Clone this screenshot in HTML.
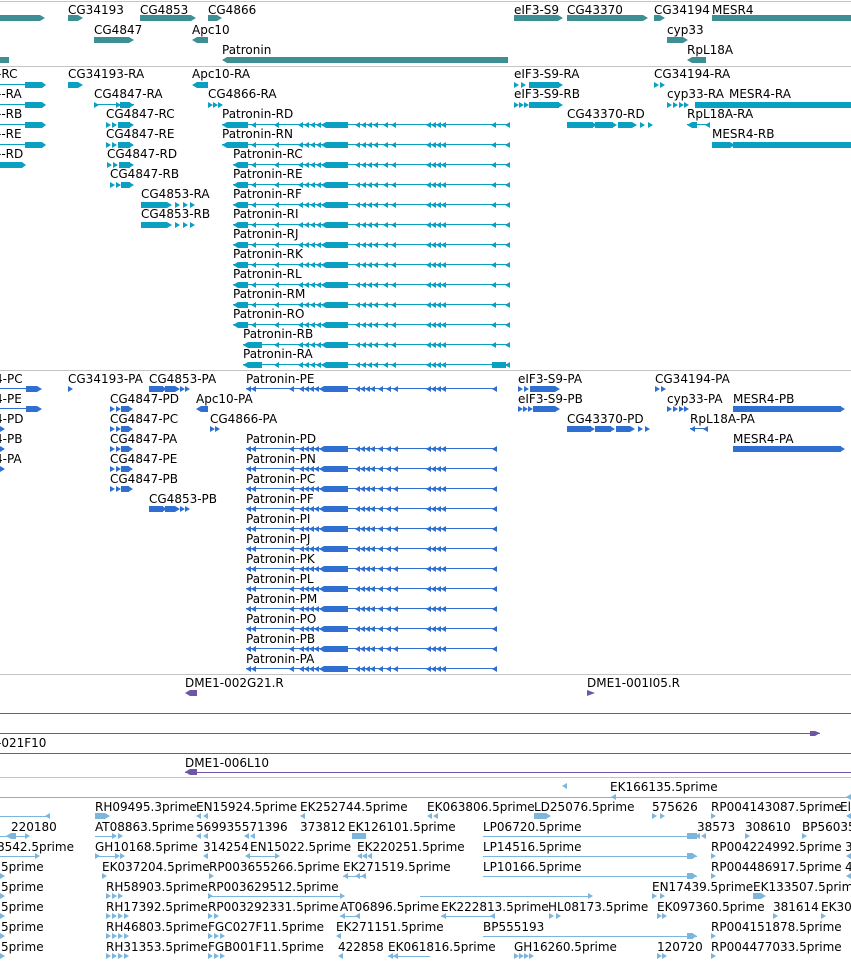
<!DOCTYPE html>
<html><head><meta charset="utf-8"><style>
html,body{margin:0;padding:0;background:#fff;width:851px;height:962px;overflow:hidden}
svg{display:block}
text{font-family:"DejaVu Sans","Liberation Sans",sans-serif;font-size:12px;fill:#000}
</style></head><body>
<svg width="851" height="962" viewBox="0 0 851 962" xmlns="http://www.w3.org/2000/svg">
<defs>
<polygon id="la" points="-5,0 0,-3 0,3"/>
<polygon id="ra" points="5,0 0,-3 0,3"/>
<g id="patT">
<use href="#la" x="256"/><use href="#la" x="279"/>
<use href="#la" x="303"/><use href="#la" x="309"/><use href="#la" x="315"/><use href="#la" x="321"/>
<polygon points="321,0 326,-3 348,-3 348,3 326,3"/>
<use href="#la" x="360"/><use href="#la" x="366"/><use href="#la" x="372"/><use href="#la" x="378"/>
<use href="#la" x="388"/><use href="#la" x="396"/>
<use href="#la" x="431"/><use href="#la" x="436"/><use href="#la" x="441"/><use href="#la" x="446"/>
<use href="#la" x="496"/><use href="#la" x="510"/>
</g>
<g id="patP">
<use href="#la" x="294"/><use href="#la" x="304"/><use href="#la" x="309"/><use href="#la" x="314"/><use href="#la" x="319"/>
<polygon points="319,0 324,-3 348,-3 348,3 324,3"/>
<use href="#la" x="360"/><use href="#la" x="365"/><use href="#la" x="370"/><use href="#la" x="375"/>
<use href="#la" x="383"/><use href="#la" x="391"/><use href="#la" x="398"/>
<use href="#la" x="431"/><use href="#la" x="436"/><use href="#la" x="441"/><use href="#la" x="446"/>
<use href="#la" x="497"/>
</g>
<g id="pst"><use href="#la" x="251"/><use href="#la" x="256"/></g>
</defs>

<g stroke="#c4c4c4" stroke-width="1">
<line x1="0" y1="1.5" x2="851" y2="1.5"/>
<line x1="0" y1="66.5" x2="851" y2="66.5"/>
<line x1="0" y1="370.5" x2="851" y2="370.5"/>
<line x1="0" y1="674.5" x2="851" y2="674.5"/>
<line x1="0" y1="777.5" x2="851" y2="777.5"/>
</g>

<g fill="#3d8f94">
<polygon points="0,15 40,15 45,18 40,21 0,21"/>
<polygon points="68,15 78,15 83,18 78,21 68,21"/>
<polygon points="140,15 191,15 196,18 191,21 140,21"/>
<polygon points="208,15 217,15 222,18 217,21 208,21"/>
<polygon points="514,15 558,15 563,18 558,21 514,21"/>
<polygon points="567,15 643,15 648,18 643,21 567,21"/>
<polygon points="654,15 660,15 665,18 660,21 654,21"/>
<rect x="712" y="15" width="139" height="6"/>
<polygon points="94,37 129,37 134,40 129,43 94,43"/>
<polygon points="192,40 197,37 208,37 208,43 197,43"/>
<polygon points="667,37 683,37 688,40 683,43 667,43"/>
<polygon points="222,60 227,57 508,57 508,63 227,63"/>
<rect x="0" y="57" width="9" height="6"/>
<polygon points="687,60 692,57 706,57 706,63 692,63"/>
</g>
<text x="68" y="14">CG34193</text><text x="140" y="14">CG4853</text><text x="208" y="14">CG4866</text>
<text x="514" y="14">eIF3-S9</text><text x="567" y="14">CG43370</text><text x="654" y="14">CG34194</text><text x="712" y="14">MESR4</text>
<text x="94" y="34">CG4847</text><text x="192" y="34">Apc10</text><text x="667" y="34">cyp33</text>
<text x="222" y="54">Patronin</text><text x="687" y="54">RpL18A</text>

<g fill="#0aa0c2" stroke="#0aa0c2">
<g stroke-width="1">
<line x1="0" y1="84.5" x2="45" y2="84.5"/><line x1="0" y1="104.5" x2="45" y2="104.5"/>
<line x1="0" y1="124.5" x2="45" y2="124.5"/><line x1="0" y1="144.5" x2="45" y2="144.5"/>
<line x1="94" y1="104.5" x2="134" y2="104.5"/>
<line x1="687" y1="124.5" x2="710" y2="124.5"/>
<line x1="712" y1="144.5" x2="851" y2="144.5"/>
<line x1="222" y1="124.5" x2="508" y2="124.5"/><line x1="222" y1="144.5" x2="508" y2="144.5"/>
<line x1="233" y1="164.5" x2="508" y2="164.5"/><line x1="233" y1="184.5" x2="508" y2="184.5"/>
<line x1="233" y1="204.5" x2="508" y2="204.5"/><line x1="233" y1="224.5" x2="508" y2="224.5"/>
<line x1="233" y1="244.5" x2="508" y2="244.5"/><line x1="233" y1="264.5" x2="508" y2="264.5"/>
<line x1="233" y1="284.5" x2="508" y2="284.5"/><line x1="233" y1="304.5" x2="508" y2="304.5"/>
<line x1="233" y1="324.5" x2="508" y2="324.5"/><line x1="243" y1="344.5" x2="508" y2="344.5"/>
<line x1="243" y1="364.5" x2="508" y2="364.5"/>
</g>
<g stroke="none">
<rect x="25" y="82" width="17" height="6"/><polygon points="42,82 46,85 42,88"/>
<rect x="25" y="102" width="17" height="6"/><polygon points="42,102 46,105 42,108"/>
<rect x="25" y="122" width="17" height="6"/><polygon points="42,122 46,125 42,128"/>
<rect x="25" y="142" width="17" height="6"/><polygon points="42,142 46,145 42,148"/>
<rect x="0" y="162" width="22" height="6"/><polygon points="22,162 26,165 22,168"/>
<polygon points="68,82 78,82 83,85 78,88 68,88"/>
<polygon points="192,85 197,82 208,82 208,88 197,88"/>
<use href="#ra" x="514" y="85"/><use href="#ra" x="521" y="85"/><rect x="529" y="82" width="30" height="6"/><use href="#ra" x="558" y="85"/>
<use href="#ra" x="654" y="85"/><use href="#ra" x="660" y="85"/>
<use href="#ra" x="94" y="105"/><use href="#ra" x="116" y="105"/><rect x="120" y="102" width="10" height="6"/><use href="#ra" x="129" y="105"/>
<use href="#ra" x="208" y="105"/><use href="#ra" x="213" y="105"/><use href="#ra" x="218" y="105"/>
<use href="#ra" x="514" y="105"/><use href="#ra" x="519" y="105"/><use href="#ra" x="524" y="105"/><rect x="529" y="102" width="30" height="6"/><use href="#ra" x="558" y="105"/>
<use href="#ra" x="667" y="105"/><use href="#ra" x="673" y="105"/><use href="#ra" x="679" y="105"/><use href="#ra" x="684" y="105"/>
<rect x="733" y="102" width="118" height="6"/><rect x="695" y="102" width="38" height="6"/>
<use href="#ra" x="106" y="125"/><use href="#ra" x="112" y="125"/><rect x="118" y="122" width="12" height="6"/><use href="#ra" x="129" y="125"/>
<use href="#ra" x="106" y="145"/><use href="#ra" x="112" y="145"/><rect x="118" y="142" width="12" height="6"/><use href="#ra" x="129" y="145"/>
<use href="#ra" x="107" y="165"/><use href="#ra" x="113" y="165"/><rect x="119" y="162" width="11" height="6"/><use href="#ra" x="129" y="165"/>
<use href="#ra" x="110" y="185"/><use href="#ra" x="116" y="185"/><rect x="121" y="182" width="9" height="6"/><use href="#ra" x="129" y="185"/>
<rect x="141" y="202" width="26" height="6"/><use href="#ra" x="167" y="205"/><use href="#ra" x="175" y="205"/><use href="#ra" x="183" y="205"/><use href="#ra" x="190" y="205"/>
<rect x="141" y="222" width="26" height="6"/><use href="#ra" x="167" y="225"/><use href="#ra" x="175" y="225"/><use href="#ra" x="183" y="225"/><use href="#ra" x="190" y="225"/>
<rect x="567" y="122" width="26" height="6"/><use href="#ra" x="592" y="125"/><rect x="595" y="122" width="18" height="6"/><use href="#ra" x="612" y="125"/><rect x="618" y="122" width="14" height="6"/><use href="#ra" x="632" y="125"/><use href="#ra" x="640" y="125"/><use href="#ra" x="648" y="125"/>
<polygon points="687,125 692,122 697,122 697,128 692,128"/><use href="#la" x="710" y="125"/>
<rect x="712" y="142" width="18" height="6"/><use href="#ra" x="730" y="145"/><rect x="733" y="142" width="118" height="6"/>
<polygon points="222,125 227,122 248,122 248,128 227,128"/><use href="#patT" y="125"/>
<polygon points="222,145 227,142 248,142 248,148 227,148"/><use href="#patT" y="145"/>
<polygon points="233,165 238,162 248,162 248,168 238,168"/><use href="#patT" y="165"/>
<polygon points="233,185 238,182 248,182 248,188 238,188"/><use href="#patT" y="185"/>
<polygon points="233,205 238,202 248,202 248,208 238,208"/><use href="#patT" y="205"/>
<polygon points="233,225 238,222 248,222 248,228 238,228"/><use href="#patT" y="225"/>
<polygon points="233,245 238,242 248,242 248,248 238,248"/><use href="#patT" y="245"/>
<polygon points="233,265 238,262 248,262 248,268 238,268"/><use href="#patT" y="265"/>
<polygon points="233,285 238,282 248,282 248,288 238,288"/><use href="#patT" y="285"/>
<polygon points="233,305 238,302 248,302 248,308 238,308"/><use href="#patT" y="305"/>
<polygon points="233,325 238,322 248,322 248,328 238,328"/><use href="#patT" y="325"/>
<polygon points="243,345 248,342 262,342 262,348 248,348"/><use href="#patT" y="345"/>
<polygon points="243,365 248,362 262,362 262,368 248,368"/><use href="#patT" y="365"/><rect x="492" y="362" width="14" height="6"/>
</g>
</g>
<text x="-3" y="78">-RC</text><text x="68" y="78">CG34193-RA</text><text x="192" y="78">Apc10-RA</text><text x="514" y="78">eIF3-S9-RA</text><text x="654" y="78">CG34194-RA</text>
<text x="-3" y="98">--RA</text><text x="94" y="98">CG4847-RA</text><text x="208" y="98">CG4866-RA</text><text x="514" y="98">eIF3-S9-RB</text><text x="667" y="98">cyp33-RA</text><text x="729" y="98">MESR4-RA</text>
<text x="-3" y="118">--RB</text><text x="106" y="118">CG4847-RC</text><text x="222" y="118">Patronin-RD</text><text x="567" y="118">CG43370-RD</text><text x="687" y="118">RpL18A-RA</text>
<text x="-3" y="138">--RE</text><text x="106" y="138">CG4847-RE</text><text x="222" y="138">Patronin-RN</text><text x="712" y="138">MESR4-RB</text>
<text x="-3" y="158">--RD</text><text x="107" y="158">CG4847-RD</text><text x="233" y="158">Patronin-RC</text>
<text x="110" y="178">CG4847-RB</text><text x="233" y="178">Patronin-RE</text>
<text x="141" y="198">CG4853-RA</text><text x="233" y="198">Patronin-RF</text>
<text x="141" y="218">CG4853-RB</text><text x="233" y="218">Patronin-RI</text>
<text x="233" y="238">Patronin-RJ</text><text x="233" y="258">Patronin-RK</text><text x="233" y="278">Patronin-RL</text>
<text x="233" y="298">Patronin-RM</text><text x="233" y="318">Patronin-RO</text><text x="243" y="338">Patronin-RB</text><text x="243" y="358">Patronin-RA</text>

<g fill="#2f6fd1" stroke="#2f6fd1">
<g stroke-width="1">
<line x1="0" y1="388.5" x2="40" y2="388.5"/><line x1="0" y1="408.5" x2="40" y2="408.5"/>
<line x1="246" y1="388.5" x2="495" y2="388.5"/>
<line x1="246" y1="448.5" x2="495" y2="448.5"/><line x1="246" y1="468.5" x2="495" y2="468.5"/>
<line x1="246" y1="488.5" x2="495" y2="488.5"/><line x1="246" y1="508.5" x2="495" y2="508.5"/>
<line x1="246" y1="528.5" x2="495" y2="528.5"/><line x1="246" y1="548.5" x2="495" y2="548.5"/>
<line x1="246" y1="568.5" x2="495" y2="568.5"/><line x1="246" y1="588.5" x2="495" y2="588.5"/>
<line x1="246" y1="608.5" x2="495" y2="608.5"/><line x1="246" y1="628.5" x2="495" y2="628.5"/>
<line x1="246" y1="648.5" x2="495" y2="648.5"/><line x1="246" y1="668.5" x2="495" y2="668.5"/>
<line x1="690" y1="428.5" x2="708" y2="428.5"/>
</g>
<g stroke="none">
<rect x="26" y="386" width="11" height="6"/><use href="#ra" x="37" y="389"/>
<rect x="26" y="406" width="11" height="6"/><use href="#ra" x="37" y="409"/>
<use href="#ra" x="0" y="429"/><use href="#ra" x="0" y="449"/><use href="#ra" x="0" y="469"/>
<use href="#ra" x="68" y="389"/>
<rect x="149" y="386" width="14" height="6"/><use href="#ra" x="162" y="389"/><rect x="165" y="386" width="10" height="6"/><use href="#ra" x="175" y="389"/><use href="#ra" x="180" y="389"/><use href="#ra" x="185" y="389"/>
<rect x="149" y="506" width="14" height="6"/><use href="#ra" x="162" y="509"/><rect x="165" y="506" width="10" height="6"/><use href="#ra" x="175" y="509"/><use href="#ra" x="180" y="509"/><use href="#ra" x="185" y="509"/>
<use href="#ra" x="110" y="409"/><use href="#ra" x="116" y="409"/><rect x="121" y="406" width="8" height="6"/><use href="#ra" x="128" y="409"/>
<use href="#ra" x="110" y="429"/><use href="#ra" x="116" y="429"/><rect x="121" y="426" width="8" height="6"/><use href="#ra" x="128" y="429"/>
<use href="#ra" x="110" y="449"/><use href="#ra" x="116" y="449"/><rect x="121" y="446" width="8" height="6"/><use href="#ra" x="128" y="449"/>
<use href="#ra" x="110" y="469"/><use href="#ra" x="116" y="469"/><rect x="121" y="466" width="8" height="6"/><use href="#ra" x="128" y="469"/>
<use href="#ra" x="110" y="489"/><use href="#ra" x="116" y="489"/><rect x="121" y="486" width="8" height="6"/><use href="#ra" x="128" y="489"/>
<polygon points="196,409 201,406 208,406 208,412 201,412"/>
<use href="#ra" x="210" y="429"/><use href="#ra" x="215" y="429"/>
<use href="#ra" x="518" y="389"/><use href="#ra" x="524" y="389"/><rect x="530" y="386" width="25" height="6"/><use href="#ra" x="555" y="389"/>
<use href="#ra" x="518" y="409"/><use href="#ra" x="523" y="409"/><use href="#ra" x="528" y="409"/><rect x="533" y="406" width="22" height="6"/><use href="#ra" x="555" y="409"/>
<use href="#ra" x="655" y="389"/><use href="#ra" x="661" y="389"/>
<use href="#ra" x="667" y="409"/><use href="#ra" x="673" y="409"/><use href="#ra" x="679" y="409"/><use href="#ra" x="684" y="409"/>
<rect x="733" y="406" width="108" height="6"/><use href="#ra" x="840" y="409"/>
<rect x="733" y="446" width="108" height="6"/><use href="#ra" x="840" y="449"/>
<rect x="567" y="426" width="24" height="6"/><use href="#ra" x="590" y="429"/><rect x="595" y="426" width="16" height="6"/><use href="#ra" x="610" y="429"/><rect x="616" y="426" width="14" height="6"/><use href="#ra" x="630" y="429"/><use href="#ra" x="638" y="429"/><use href="#ra" x="645" y="429"/>
<use href="#la" x="695" y="429"/><use href="#la" x="708" y="429"/>
<use href="#pst" y="389"/><use href="#patP" y="389"/>
<use href="#pst" y="449"/><use href="#patP" y="449"/>
<use href="#pst" y="469"/><use href="#patP" y="469"/>
<use href="#pst" y="489"/><use href="#patP" y="489"/>
<use href="#pst" y="509"/><use href="#patP" y="509"/>
<use href="#pst" y="529"/><use href="#patP" y="529"/>
<use href="#pst" y="549"/><use href="#patP" y="549"/>
<use href="#pst" y="569"/><use href="#patP" y="569"/>
<use href="#pst" y="589"/><use href="#patP" y="589"/>
<use href="#pst" y="609"/><use href="#patP" y="609"/>
<use href="#pst" y="629"/><use href="#patP" y="629"/>
<use href="#pst" y="649"/><use href="#patP" y="649"/>
<use href="#pst" y="669"/><use href="#patP" y="669"/>
</g>
</g>
<text x="-5" y="383">4-PC</text><text x="68" y="383">CG34193-PA</text><text x="149" y="383">CG4853-PA</text><text x="246" y="383">Patronin-PE</text><text x="518" y="383">eIF3-S9-PA</text><text x="655" y="383">CG34194-PA</text>
<text x="-5" y="403">4-PE</text><text x="110" y="403">CG4847-PD</text><text x="196" y="403">Apc10-PA</text><text x="518" y="403">eIF3-S9-PB</text><text x="667" y="403">cyp33-PA</text><text x="733" y="403">MESR4-PB</text>
<text x="-5" y="423">4-PD</text><text x="110" y="423">CG4847-PC</text><text x="210" y="423">CG4866-PA</text><text x="567" y="423">CG43370-PD</text><text x="690" y="423">RpL18A-PA</text>
<text x="-5" y="443">4-PB</text><text x="110" y="443">CG4847-PA</text><text x="246" y="443">Patronin-PD</text><text x="733" y="443">MESR4-PA</text>
<text x="-5" y="463">4-PA</text><text x="110" y="463">CG4847-PE</text><text x="246" y="463">Patronin-PN</text>
<text x="110" y="483">CG4847-PB</text><text x="246" y="483">Patronin-PC</text>
<text x="149" y="503">CG4853-PB</text><text x="246" y="503">Patronin-PF</text>
<text x="246" y="523">Patronin-PI</text><text x="246" y="543">Patronin-PJ</text><text x="246" y="563">Patronin-PK</text>
<text x="246" y="583">Patronin-PL</text><text x="246" y="603">Patronin-PM</text><text x="246" y="623">Patronin-PO</text>
<text x="246" y="643">Patronin-PB</text><text x="246" y="663">Patronin-PA</text>

<g fill="#6e55a8" stroke="#6e55a8">
<g stroke-width="1">
<line x1="0" y1="713.5" x2="851" y2="713.5"/>
<line x1="0" y1="733.5" x2="820" y2="733.5"/>
<line x1="0" y1="753.5" x2="851" y2="753.5"/>
<line x1="185" y1="772.5" x2="851" y2="772.5"/>
</g>
<g stroke="none">
<polygon points="185,693 190,690 197,690 197,696 190,696"/>
<polygon points="587,690 595,693 587,696"/>
<polygon points="810,731 815,731 820,733 815,736 810,736"/>
<polygon points="185,772 190,769 197,769 197,775 190,775"/>
</g>
</g>
<text x="185" y="687">DME1-002G21.R</text><text x="587" y="687">DME1-001I05.R</text>
<text x="-3" y="747">-021F10</text><text x="185" y="767">DME1-006L10</text>

<g fill="#7db6dd" stroke="#7db6dd">
<g stroke-width="1">
<line x1="0" y1="797.5" x2="851" y2="797.5"/>
<line x1="0" y1="816.5" x2="50" y2="816.5"/>
<line x1="0" y1="836.5" x2="28" y2="836.5"/>
<line x1="95" y1="836.5" x2="112" y2="836.5"/>
<line x1="250" y1="856.5" x2="275" y2="856.5"/>
<line x1="95" y1="856.5" x2="115" y2="856.5"/>
<line x1="343" y1="876.5" x2="365" y2="876.5"/>
<line x1="483" y1="836.5" x2="700" y2="836.5"/>
<line x1="483" y1="856.5" x2="697" y2="856.5"/>
<line x1="483" y1="876.5" x2="697" y2="876.5"/>
<line x1="208" y1="896.5" x2="340" y2="896.5"/>
<line x1="420" y1="896.5" x2="588" y2="896.5"/>
<line x1="340" y1="916.5" x2="360" y2="916.5"/>
<line x1="441" y1="916.5" x2="495" y2="916.5"/>
<line x1="483" y1="936.5" x2="697" y2="936.5"/>
<line x1="388" y1="956.5" x2="430" y2="956.5"/>
<line x1="0" y1="856.5" x2="35" y2="856.5"/>
</g>
<g stroke="none">
<use href="#la" x="616" y="797"/><use href="#la" x="851" y="797"/>
<use href="#la" x="50" y="816"/>
<rect x="95" y="813" width="10" height="6"/><use href="#ra" x="105" y="816"/>
<use href="#la" x="201" y="816"/><use href="#la" x="208" y="816"/>
<use href="#la" x="305" y="816"/>
<use href="#la" x="432" y="816"/><use href="#la" x="438" y="816"/>
<rect x="534" y="813" width="12" height="6"/><use href="#ra" x="546" y="816"/>
<use href="#la" x="567" y="786"/>
<use href="#ra" x="652" y="816"/><use href="#ra" x="660" y="816"/>
<use href="#ra" x="711" y="816"/>
<use href="#la" x="851" y="816"/>
<polygon points="6,836 11,833 16,833 16,839 11,839"/><use href="#ra" x="25" y="836"/>
<use href="#ra" x="112" y="836"/><use href="#ra" x="118" y="836"/>
<use href="#la" x="201" y="836"/><use href="#la" x="208" y="836"/>
<use href="#la" x="249" y="836"/><use href="#la" x="255" y="836"/>
<rect x="352" y="833" width="14" height="6"/>
<rect x="687" y="833" width="10" height="6"/><use href="#la" x="700" y="836"/><use href="#la" x="706" y="836"/>
<use href="#ra" x="745" y="836"/><use href="#ra" x="802" y="836"/>
<use href="#ra" x="35" y="856"/>
<use href="#ra" x="95" y="856"/><use href="#ra" x="115" y="856"/><use href="#ra" x="120" y="856"/>
<use href="#la" x="208" y="856"/><use href="#la" x="250" y="856"/><use href="#ra" x="275" y="856"/>
<use href="#la" x="362" y="856"/><use href="#la" x="367" y="856"/><use href="#la" x="372" y="856"/>
<polygon points="692,853 697,856 692,859"/><rect x="687" y="853" width="6" height="6"/>
<use href="#ra" x="711" y="856"/><use href="#la" x="851" y="856"/>
<use href="#ra" x="0" y="876"/><use href="#ra" x="102" y="876"/><use href="#ra" x="209" y="876"/>
<use href="#la" x="348" y="876"/><use href="#la" x="360" y="876"/><use href="#la" x="366" y="876"/>
<rect x="687" y="873" width="6" height="6"/><polygon points="692,873 697,876 692,879"/>
<use href="#ra" x="711" y="876"/><use href="#la" x="851" y="876"/>
<use href="#ra" x="0" y="896"/><use href="#ra" x="106" y="896"/><use href="#ra" x="112" y="896"/><use href="#ra" x="118" y="896"/>
<use href="#ra" x="208" y="896"/><use href="#ra" x="340" y="896"/><use href="#ra" x="588" y="896"/>
<use href="#ra" x="652" y="896"/><use href="#ra" x="660" y="896"/>
<rect x="753" y="893" width="8" height="6"/><use href="#ra" x="761" y="896"/>
<use href="#ra" x="0" y="916"/><use href="#ra" x="106" y="916"/><use href="#ra" x="112" y="916"/><use href="#ra" x="118" y="916"/><use href="#ra" x="124" y="916"/>
<use href="#ra" x="208" y="916"/><use href="#ra" x="214" y="916"/>
<use href="#la" x="345" y="916"/><use href="#la" x="360" y="916"/>
<use href="#la" x="446" y="916"/><use href="#la" x="495" y="916"/>
<use href="#ra" x="549" y="916"/><use href="#ra" x="556" y="916"/>
<use href="#ra" x="657" y="916"/><use href="#ra" x="662" y="916"/>
<use href="#ra" x="773" y="916"/><use href="#ra" x="821" y="916"/>
<use href="#ra" x="0" y="936"/><use href="#ra" x="106" y="936"/><use href="#ra" x="112" y="936"/><use href="#ra" x="118" y="936"/><use href="#ra" x="124" y="936"/>
<use href="#ra" x="208" y="936"/><use href="#ra" x="214" y="936"/><use href="#ra" x="220" y="936"/>
<use href="#la" x="341" y="936"/>
<rect x="687" y="933" width="6" height="6"/><polygon points="692,933 697,936 692,939"/>
<use href="#ra" x="711" y="936"/>
<use href="#ra" x="0" y="956"/><use href="#ra" x="106" y="956"/><use href="#ra" x="112" y="956"/><use href="#ra" x="118" y="956"/><use href="#ra" x="124" y="956"/>
<use href="#ra" x="208" y="956"/><use href="#ra" x="214" y="956"/><use href="#ra" x="220" y="956"/>
<use href="#la" x="343" y="956"/><use href="#la" x="393" y="956"/><use href="#la" x="398" y="956"/>
<use href="#ra" x="514" y="956"/><use href="#ra" x="519" y="956"/><use href="#ra" x="524" y="956"/><use href="#ra" x="529" y="956"/>
<use href="#ra" x="657" y="956"/><use href="#ra" x="662" y="956"/>
<use href="#ra" x="711" y="956"/>
</g>
</g>
<text x="610" y="791">EK166135.5prime</text>
<text x="95" y="811">RH09495.3prime</text><text x="196" y="811">EN15924.5prime</text><text x="300" y="811">EK252744.5prime</text><text x="427" y="811">EK063806.5prime</text><text x="534" y="811">LD25076.5prime</text><text x="652" y="811">575626</text><text x="711" y="811">RP004143087.5prime</text><text x="840" y="811">El</text>
<text x="11" y="831">220180</text><text x="95" y="831">AT08863.5prime</text><text x="196" y="831">569935571396</text><text x="300" y="831">373812</text><text x="348" y="831">EK126101.5prime</text><text x="483" y="831">LP06720.5prime</text><text x="697" y="831">38573</text><text x="745" y="831">308610</text><text x="802" y="831">BP56035</text>
<text x="-3" y="851">8542.5prime</text><text x="95" y="851">GH10168.5prime</text><text x="203" y="851">314254</text><text x="250" y="851">EN15022.5prime</text><text x="357" y="851">EK220251.5prime</text><text x="483" y="851">LP14516.5prime</text><text x="711" y="851">RP004224992.5prime</text><text x="845" y="851">3</text>
<text x="1" y="871">5prime</text><text x="102" y="871">EK037204.5prime</text><text x="209" y="871">RP003655266.5prime</text><text x="343" y="871">EK271519.5prime</text><text x="483" y="871">LP10166.5prime</text><text x="711" y="871">RP004486917.5prime</text><text x="845" y="871">4</text>
<text x="1" y="891">5prime</text><text x="106" y="891">RH58903.5prime</text><text x="208" y="891">RP003629512.5prime</text><text x="652" y="891">EN17439.5prime</text><text x="753" y="891">EK133507.5prime</text>
<text x="1" y="911">5prime</text><text x="106" y="911">RH17392.5prime</text><text x="208" y="911">RP003292331.5prime</text><text x="340" y="911">AT06896.5prime</text><text x="441" y="911">EK222813.5prime</text><text x="548" y="911">HL08173.5prime</text><text x="657" y="911">EK097360.5prime</text><text x="773" y="911">381614</text><text x="821" y="911">EK30</text>
<text x="1" y="931">5prime</text><text x="106" y="931">RH46803.5prime</text><text x="208" y="931">FGC027F11.5prime</text><text x="336" y="931">EK271151.5prime</text><text x="483" y="931">BP555193</text><text x="711" y="931">RP004151878.5prime</text>
<text x="1" y="951">5prime</text><text x="106" y="951">RH31353.5prime</text><text x="208" y="951">FGB001F11.5prime</text><text x="338" y="951">422858</text><text x="388" y="951">EK061816.5prime</text><text x="514" y="951">GH16260.5prime</text><text x="657" y="951">120720</text><text x="711" y="951">RP004477033.5prime</text>
</svg>
</body></html>
